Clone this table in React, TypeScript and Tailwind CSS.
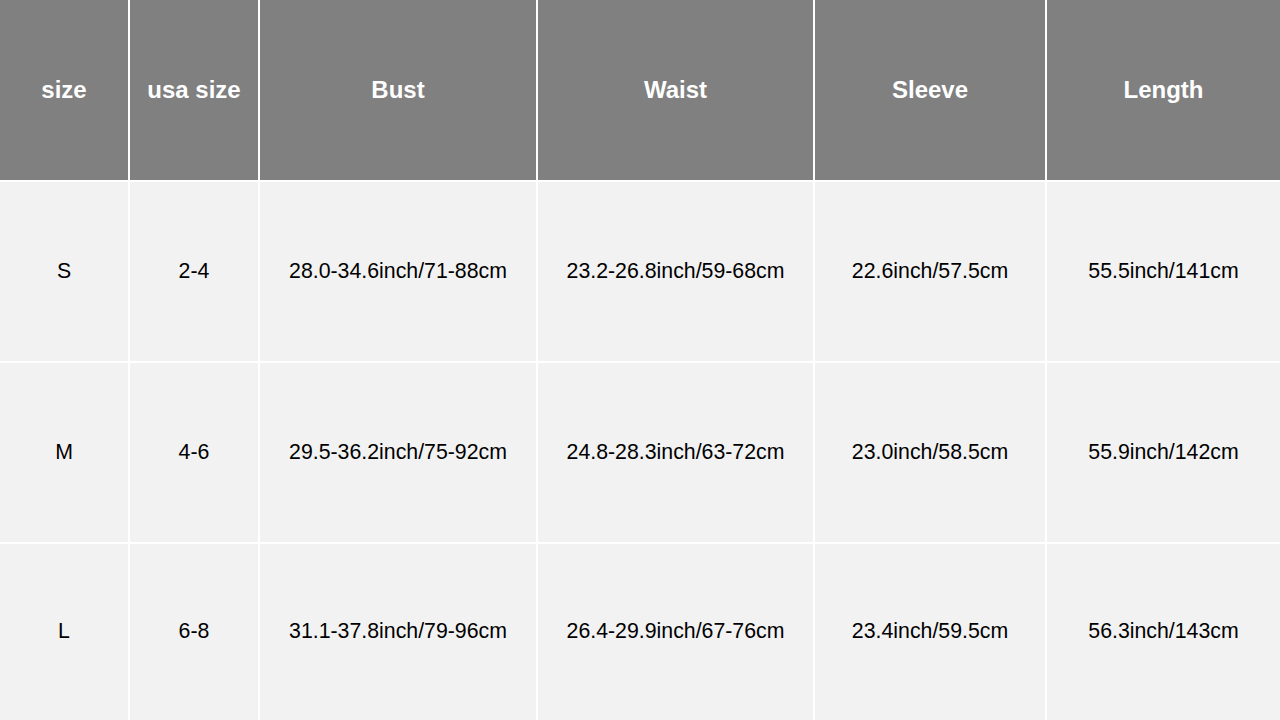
const headers = ['size', 'usa size', 'Bust', 'Waist', 'Sleeve', 'Length'];

const rows = [
  ['S', '2-4', '28.0-34.6inch/71-88cm', '23.2-26.8inch/59-68cm', '22.6inch/57.5cm', '55.5inch/141cm'],
  ['M', '4-6', '29.5-36.2inch/75-92cm', '24.8-28.3inch/63-72cm', '23.0inch/58.5cm', '55.9inch/142cm'],
  ['L', '6-8', '31.1-37.8inch/79-96cm', '26.4-29.9inch/67-76cm', '23.4inch/59.5cm', '56.3inch/143cm'],
];

export default function App() {
  return (
    <div
      className="w-[1280px] h-[720px] overflow-hidden bg-white grid grid-cols-[128px_128px_276px_275px_230px_1fr] grid-rows-[180px_179px_179px_1fr] gap-[2px]"
      style={{ fontFamily: '"Liberation Sans", Arial, sans-serif' }}
    >
      {headers.map((h) => (
        <div key={h} className="bg-[#808080] flex items-center justify-center text-white font-bold text-[24px]">
          {h}
        </div>
      ))}
      {rows.map((row) =>
        row.map((cell, i) => (
          <div key={row[0] + i} className="bg-[#f2f2f2] flex items-center justify-center text-black text-[21.3px]">
            {cell}
          </div>
        ))
      )}
    </div>
  );
}
